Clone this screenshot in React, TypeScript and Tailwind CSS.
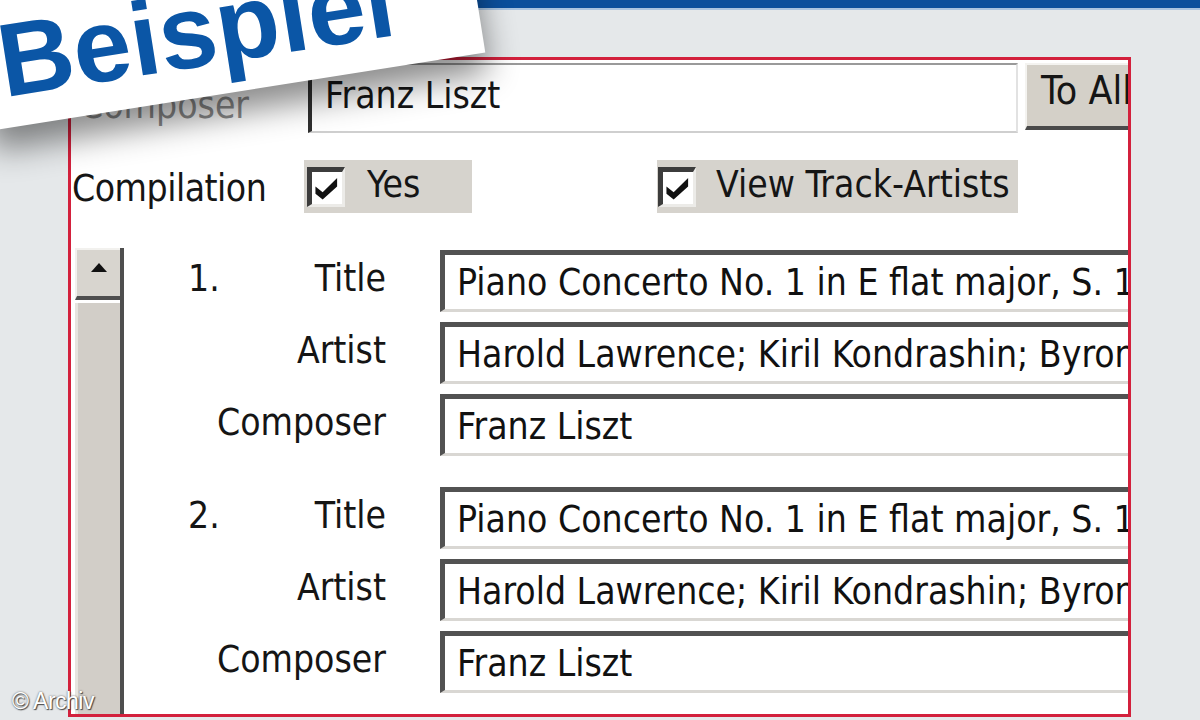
import React from "react";

const font = { fontFamily: '"DejaVu Sans Condensed", "DejaVu Sans", sans-serif' };

function Check() {
  return (
    <div className="w-[38px] h-[40px] shrink-0 bg-white border-t-[5px] border-l-[5px] border-b-[3px] border-r-[3px] border-t-[#3c3c3c] border-l-[#3c3c3c] border-b-[#ecebe8] border-r-[#ecebe8] flex items-center justify-center">
      <svg width="26" height="26" viewBox="0 0 18 18">
        <polygon points="1,8 6,12 16,2 16,8 6,17 1,13" fill="#111" />
      </svg>
    </div>
  );
}

function Field({ text }: { text: string }) {
  return (
    <div className="ml-[54px] w-[780px] h-[62px] shrink-0 bg-white border-t-[5px] border-l-[5px] border-t-[#525252] border-l-[#525252] border-b-[3px] border-b-[#d9d7d3] flex items-center pl-[12px] whitespace-nowrap overflow-hidden text-[#111]">
      {text}
    </div>
  );
}

function Row({ num, label, text }: { num?: string; label: string; text: string }) {
  return (
    <div className="flex items-center h-[62px]">
      <div className="w-[34px] shrink-0 pb-[6px]">{num ?? ""}</div>
      <div className="w-[164px] shrink-0 flex justify-end pb-[6px] whitespace-nowrap">{label}</div>
      <Field text={text} />
    </div>
  );
}

function Group({ num }: { num: string }) {
  return (
    <div className="flex flex-col gap-[10px]">
      <Row num={num} label="Title" text="Piano Concerto No. 1 in E flat major, S. 124" />
      <Row label="Artist" text="Harold Lawrence; Kiril Kondrashin; Byron Janis" />
      <Row label="Composer" text="Franz Liszt" />
    </div>
  );
}

export default function App() {
  return (
    <div className="relative w-[1200px] h-[720px] overflow-hidden bg-[#e5e8ea]" style={font}>
      <div className="h-[8px] bg-[#0b4f9c]" />
      <div className="h-[2px] bg-[#a9c3df]" />

      <div className="ml-[68px] mt-[47px] w-[1063px] h-[660px] border-[3px] border-[#d3203c] bg-white overflow-hidden text-[37px] leading-none text-[#151515]">
        {/* Composer row */}
        <div className="flex mt-[3px] h-[70px]">
          <div className="w-[237px] shrink-0 pl-[9px] pt-[24px] text-[#8d8d8d]">Composer</div>
          <div className="w-[710px] shrink-0 h-[70px] bg-white border-l-[4px] border-l-[#2f2f2f] border-t-[2px] border-t-[#9a9a9a] border-b-[2px] border-b-[#cfcfcf] border-r-[2px] border-r-[#e2e2e2] flex items-center pl-[13px] pb-[6px] whitespace-nowrap">
            Franz Liszt
          </div>
          <div className="ml-[7px] w-[120px] h-[67px] shrink-0 bg-[#d4d0c8] border-t-[2px] border-l-[2px] border-t-[#f4f3f0] border-l-[#f4f3f0] border-b-[4px] border-b-[#4a4a4a] flex items-center pl-[14px] pb-[10px] whitespace-nowrap text-[39px]">
            To All
          </div>
        </div>

        {/* Compilation row */}
        <div className="flex mt-[27px] h-[53px] items-center">
          <div className="w-[233px] shrink-0 pl-[1px] pt-[4px] tracking-[-0.5px]">Compilation</div>
          <div className="w-[168px] h-[53px] shrink-0 bg-[#d6d3cd] flex items-center pl-[3px] gap-[22px]">
            <Check />
            <span className="pb-[4px]">Yes</span>
          </div>
          <div className="ml-[185px] w-[361px] h-[53px] shrink-0 bg-[#d6d3cd] flex items-center pl-[1px] gap-[20px]">
            <Check />
            <span className="pb-[4px] whitespace-nowrap">View Track-Artists</span>
          </div>
        </div>

        {/* Tracks */}
        <div className="flex mt-[35px]">
          <div className="ml-[4px] w-[49px] h-[480px] shrink-0 flex flex-col border-r-[4px] border-r-[#4e4e4e]">
            <div className="h-[52px] bg-[#d8d5cf] border-t-[2px] border-l-[2px] border-t-[#f2f1ee] border-l-[#f2f1ee] border-b-[4px] border-b-[#4e4e4e] flex items-center justify-center pb-[12px]">
              <svg width="16" height="9" viewBox="0 0 16 9">
                <polygon points="8,0 16,9 0,9" fill="#111" />
              </svg>
            </div>
            <div className="flex-1 mt-[3px] bg-[#d2cec8] border-l-[3px] border-l-[#e6e4df]" />
          </div>
          <div className="ml-[64px] pt-[2px] flex flex-col gap-[31px]">
            <Group num="1." />
            <Group num="2." />
          </div>
        </div>
      </div>

      {/* Beispiel label */}
      <div className="absolute left-[-30px] top-[-142px] w-[500px] h-[235px] bg-white rotate-[-9deg] shadow-[0_20px_32px_rgba(0,0,0,0.45)]">
        <div
          className="absolute left-[18px] top-[116px] text-[104px] leading-none font-bold text-[#0b56a6] whitespace-nowrap"
          style={{ fontFamily: '"Liberation Sans", Arial, sans-serif' }}
        >
          Beispiel
        </div>
      </div>

      {/* Copyright */}
      <div
        className="absolute left-[12px] top-[684px] text-[23px] text-white tracking-[-0.5px]"
        style={{ fontFamily: '"Liberation Sans", Arial, sans-serif', textShadow: "0 0 2px #555, 1px 1px 1px #444" }}
      >
        © Archiv
      </div>
    </div>
  );
}
